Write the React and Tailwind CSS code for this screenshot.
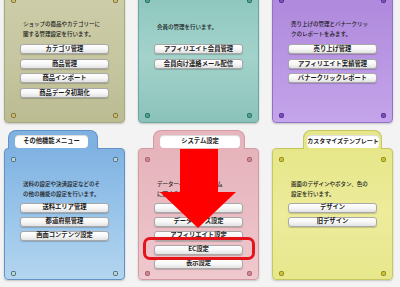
import React from "react";

const TOP_CARDS = [
  {
    key: "shop",
    card: "border-[#a9a97f] bg-gradient-to-b from-[#cdcda9] via-[#c6c6a0] to-[#bcbc93]",
    bolt: "border-[#7d6f3c] bg-[#cbbb6c]",
    desc: ["ショップの商品やカテゴリーに", "関する管理設定を行います。"],
    descPad: "",
    buttons: ["カテゴリ管理", "商品管理", "商品インポート", "商品データ初期化"],
  },
  {
    key: "member",
    card: "border-[#6aa79d] bg-gradient-to-b from-[#8cc6be] via-[#a3d3cb] to-[#8ac2ba]",
    bolt: "border-[#2a6e5f] bg-[#4ba08b]",
    desc: ["会員の管理を行います。"],
    descPad: "pt-[2.5px]",
    buttons: ["アフィリエイト会員管理", "会員向け連絡メール配信"],
  },
  {
    key: "sales",
    card: "border-[#9272c2] bg-gradient-to-b from-[#ae88dc] via-[#b996e3] to-[#c4a4ea]",
    bolt: "border-[#573092] bg-[#7b4db8]",
    desc: ["売り上げの管理とバナークリッ", "クのレポートをみます。"],
    descPad: "",
    buttons: ["売り上げ管理", "アフィリエイト実績管理", "バナークリックレポート"],
  },
];

const TAB_CARDS = [
  {
    key: "other",
    title: "その他機能メニュー",
    row: "justify-start pl-[4px]",
    tab: "w-[90px] pl-[6px] pr-[9px] border-[#6393c6] bg-[#7fb1e1]",
    label: "text-[6.3px]",
    card: "border-[#6393c6] bg-gradient-to-b from-[#80b2e2] via-[#99c5ea] to-[#b3d5ef]",
    bolt: "border-[#4b6b80] bg-[#b9d5d2]",
    desc: ["送料の設定や決済設定などのそ", "の他の機能の設定を行います。"],
    buttons: ["送料エリア管理", "都道府県管理", "画面コンテンツ設定"],
  },
  {
    key: "system",
    title: "システム設定",
    row: "justify-center pl-[1px]",
    tab: "w-[92px] pl-[6px] pr-[4px] border-[#d39ca5] bg-[#e7b5bd]",
    label: "text-[6.3px]",
    card: "border-[#d39ca5] bg-gradient-to-b from-[#e6b3bb] via-[#eabdc4] to-[#efc9ce]",
    bolt: "border-[#a2626b] bg-[#cc8590]",
    desc: ["データーベースやシステム", "に関する設定を行います。"],
    buttons: ["基本設定", "データベース設定", "アフィリエイト設定", "EC設定", "表示設定"],
  },
  {
    key: "custom",
    title: "カスタマイズテンプレート",
    row: "justify-end pr-[11px]",
    tab: "w-[79px] pl-[3px] pr-[2px] border-[#c7c75f] bg-[#e6e68b]",
    label: "text-[6px]",
    card: "border-[#c7c75f] bg-gradient-to-b from-[#e6e689] via-[#ecec9b] to-[#e7e78d]",
    bolt: "border-[#8f8720] bg-[#cbc232]",
    desc: ["画面のデザインやボタン、色の", "設定を行います。"],
    buttons: ["デザイン", "旧デザイン"],
  },
];

function Bolt({ cls }) {
  return <span className={`block h-[5px] w-[5px] rounded-[1.5px] border ${cls}`} />;
}

function BoltRow({ cls }) {
  return (
    <div className="flex justify-between">
      <Bolt cls={cls} />
      <Bolt cls={cls} />
    </div>
  );
}

function MenuButton({ label }) {
  return (
    <div className="flex h-[10px] items-center justify-center whitespace-nowrap rounded-[3px] border border-[#a8a8a8] bg-gradient-to-b from-white via-[#f7f7f7] to-[#e2e2e2] text-[6.3px] font-bold leading-none text-[#1a1a1a] shadow-[0_1px_1px_rgba(0,0,0,0.18)]">
      {label}
    </div>
  );
}

function Desc({ lines, className }) {
  return (
    <div className={`pl-[12px] text-[5.5px] font-medium leading-[9.5px] text-[#1a1a1a] whitespace-nowrap ${className}`}>
      {lines.map((l) => (
        <p key={l}>{l}</p>
      ))}
    </div>
  );
}

function TopCard({ c }) {
  return (
    <div className={`flex h-[131px] flex-col rounded-[4px] border px-[6px] pt-[4.5px] pb-[4px] shadow-[0_1px_2px_rgba(0,0,0,0.2)] ${c.card}`}>
      <BoltRow cls={c.bolt} />
      <Desc lines={c.desc} className={`mt-[17.7px] h-[24.3px] ${c.descPad}`} />
      <div className="flex flex-col gap-[4.5px] px-[9px]">
        {c.buttons.map((b) => (
          <MenuButton key={b} label={b} />
        ))}
      </div>
      <div className="flex-1" />
      <BoltRow cls={c.bolt} />
    </div>
  );
}

function TabCard({ c }) {
  return (
    <div className="flex flex-col">
      <div className={`flex ${c.row}`}>
        <div className={`relative z-10 -mb-px h-[19px] rounded-t-[8px] border border-b-0 pt-[3.5px] ${c.tab}`}>
          <div className={`flex h-[13px] items-center justify-center whitespace-nowrap rounded-[4px] bg-white font-bold leading-none text-[#1a1a1a] shadow-[inset_0_1px_1px_rgba(0,0,0,0.15)] ${c.label}`}>
            {c.title}
          </div>
        </div>
      </div>
      <div className={`flex h-[132px] flex-col rounded-[4px] border px-[6px] pt-[7.5px] pb-[3.5px] shadow-[0_1px_2px_rgba(0,0,0,0.2)] ${c.card}`}>
        <BoltRow cls={c.bolt} />
        <Desc lines={c.desc} className="mt-[18.5px] h-[22.5px]" />
        <div className="flex flex-col gap-[4px] px-[9px]">
          {c.buttons.map((b) => (
            <MenuButton key={b} label={b} />
          ))}
        </div>
        <div className="flex-1" />
        <BoltRow cls={c.bolt} />
      </div>
    </div>
  );
}

export default function App() {
  return (
    <div className="relative h-[287px] w-[400px] overflow-hidden bg-[#f3f3f3] font-['Noto_Sans_CJK_JP','Noto_Sans',sans-serif]">
      <div className="mt-[-8px] grid grid-cols-[121px_121px_121px] gap-x-[13px] gap-y-[7px] pl-[4px]">
        {TOP_CARDS.map((c) => (
          <TopCard key={c.key} c={c} />
        ))}
        {TAB_CARDS.map((c) => (
          <TabCard key={c.key} c={c} />
        ))}
      </div>

      {/* highlight: red arrow + frame around EC設定 */}
      <svg className="pointer-events-none absolute left-0 top-0" width="400" height="287" viewBox="0 0 400 287">
        <polygon points="180,138 218,138 218,192 236,192 198,228 160,192 180,192" fill="#ff0000" />
      </svg>
      <div className="pointer-events-none absolute left-[143px] top-[237px] h-[23px] w-[112px] rounded-[7px] border-[3.5px] border-[#e3141a]" />
    </div>
  );
}
